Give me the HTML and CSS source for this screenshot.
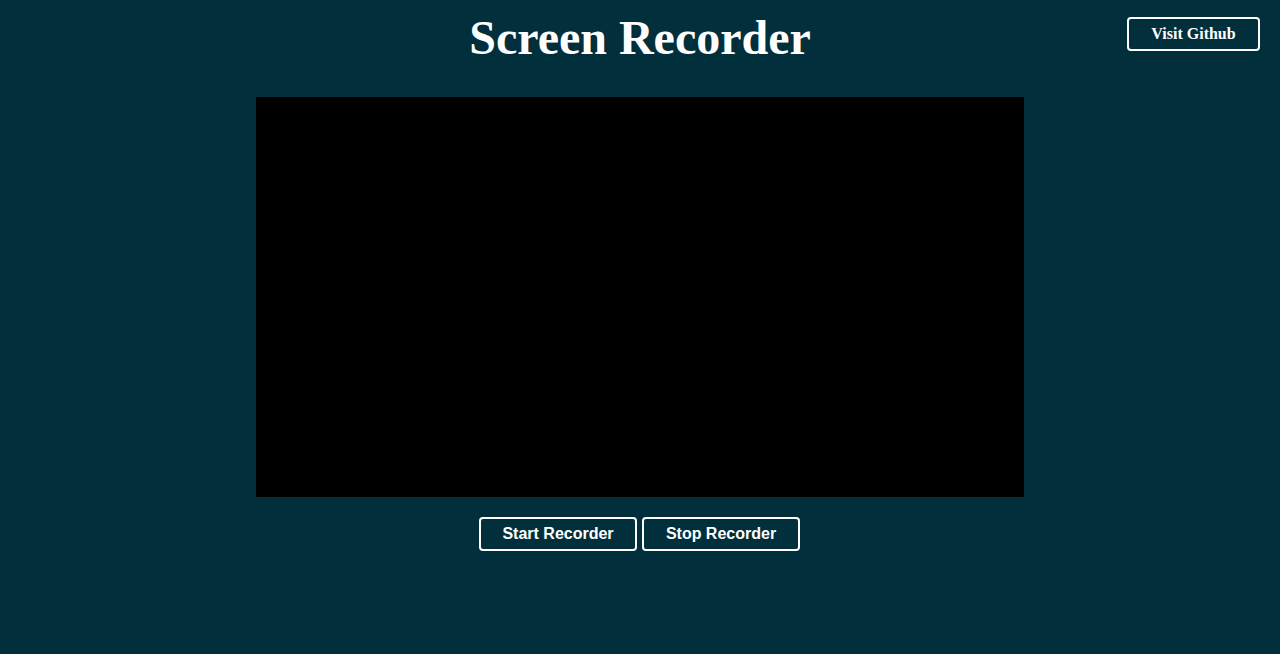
FILE: index.html
```html
<!DOCTYPE html>
<html>
<head>
<meta charset="utf-8">
<title>Screen Recorder</title>
<link rel="stylesheet" href="styles.css">
</head>
<body>
<a class="github" href="#">Visit Github</a>
<h1 class="title">Screen Recorder</h1>
<div class="stage">
  <div class="video"></div>
  <div class="controls">
    <button class="btn">Start Recorder</button>
    <button class="btn">Stop Recorder</button>
  </div>
</div>
</body>
</html>
```
FILE: styles.css
```css
html, body {
  margin: 0;
  padding: 0;
  background: #012f3c;
  height: 100%;
}
body {
  font-family: "Liberation Serif", "Times New Roman", serif;
  color: #fff;
  position: relative;
}
.github {
  position: absolute;
  top: 17px;
  right: 20px;
  box-sizing: border-box;
  width: 133px;
  height: 34px;
  border: 2px solid #fff;
  border-radius: 4px;
  color: #fff;
  text-decoration: none;
  font-family: "Liberation Serif", "Times New Roman", serif;
  font-weight: bold;
  font-size: 16px;
  display: flex;
  align-items: center;
  justify-content: center;
}
.title {
  margin: 10px 0 0;
  text-align: center;
  font-size: 48px;
  font-weight: bold;
  line-height: 55px;
}
.stage {
  display: flex;
  flex-direction: column;
  align-items: center;
  margin-top: 32px;
}
.video {
  width: 768px;
  height: 400px;
  background: #000;
}
.controls {
  display: flex;
  gap: 5px;
  margin-top: 20px;
  margin-right: 1px;
}
.btn {
  box-sizing: border-box;
  width: 158px;
  height: 34px;
  background: transparent;
  border: 2px solid #fff;
  border-radius: 4px;
  color: #fff;
  font-family: "Liberation Sans", Arial, sans-serif;
  font-weight: bold;
  font-size: 16px;
  padding: 0;
}
```
